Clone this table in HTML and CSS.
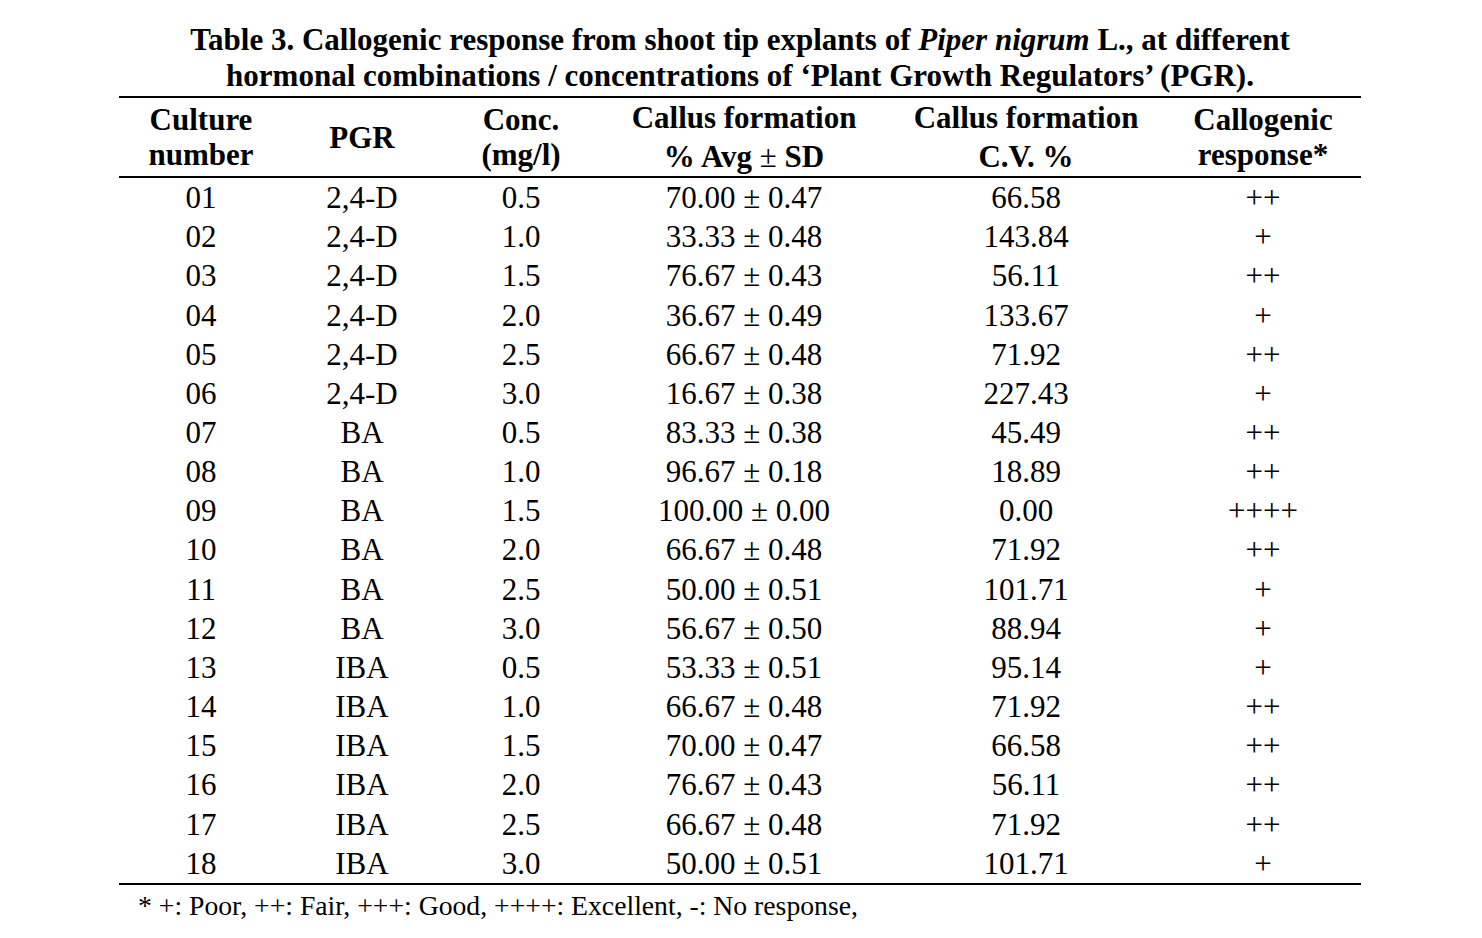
FILE: index.html
```html
<!DOCTYPE html>
<html>
<head>
<meta charset="utf-8">
<link rel="stylesheet" href="styles.css">
</head>
<body>
<div class="page">
  <h1 class="title">Table 3. Callogenic response from shoot tip explants of <i>Piper nigrum</i> L., at different<br>hormonal combinations / concentrations of ‘Plant Growth Regulators’ (PGR).</h1>
  <table class="data">
    <colgroup>
      <col class="c1"><col class="c2"><col class="c3"><col class="c4"><col class="c5"><col class="c6">
    </colgroup>
    <thead>
      <tr>
        <th>Culture<br>number</th>
        <th>PGR</th>
        <th>Conc.<br>(mg/l)</th>
        <th class="wide">Callus formation<br>% Avg <span class="pm">±</span> SD</th>
        <th class="wide">Callus formation<br>C.V. %</th>
        <th>Callogenic<br>response*</th>
      </tr>
    </thead>
    <tbody>
      <tr><td>01</td><td>2,4-D</td><td>0.5</td><td>70.00 ± 0.47</td><td>66.58</td><td>++</td></tr>
      <tr><td>02</td><td>2,4-D</td><td>1.0</td><td>33.33 ± 0.48</td><td>143.84</td><td>+</td></tr>
      <tr><td>03</td><td>2,4-D</td><td>1.5</td><td>76.67 ± 0.43</td><td>56.11</td><td>++</td></tr>
      <tr><td>04</td><td>2,4-D</td><td>2.0</td><td>36.67 ± 0.49</td><td>133.67</td><td>+</td></tr>
      <tr><td>05</td><td>2,4-D</td><td>2.5</td><td>66.67 ± 0.48</td><td>71.92</td><td>++</td></tr>
      <tr><td>06</td><td>2,4-D</td><td>3.0</td><td>16.67 ± 0.38</td><td>227.43</td><td>+</td></tr>
      <tr><td>07</td><td>BA</td><td>0.5</td><td>83.33 ± 0.38</td><td>45.49</td><td>++</td></tr>
      <tr><td>08</td><td>BA</td><td>1.0</td><td>96.67 ± 0.18</td><td>18.89</td><td>++</td></tr>
      <tr><td>09</td><td>BA</td><td>1.5</td><td>100.00 ± 0.00</td><td>0.00</td><td>++++</td></tr>
      <tr><td>10</td><td>BA</td><td>2.0</td><td>66.67 ± 0.48</td><td>71.92</td><td>++</td></tr>
      <tr><td>11</td><td>BA</td><td>2.5</td><td>50.00 ± 0.51</td><td>101.71</td><td>+</td></tr>
      <tr><td>12</td><td>BA</td><td>3.0</td><td>56.67 ± 0.50</td><td>88.94</td><td>+</td></tr>
      <tr><td>13</td><td>IBA</td><td>0.5</td><td>53.33 ± 0.51</td><td>95.14</td><td>+</td></tr>
      <tr><td>14</td><td>IBA</td><td>1.0</td><td>66.67 ± 0.48</td><td>71.92</td><td>++</td></tr>
      <tr><td>15</td><td>IBA</td><td>1.5</td><td>70.00 ± 0.47</td><td>66.58</td><td>++</td></tr>
      <tr><td>16</td><td>IBA</td><td>2.0</td><td>76.67 ± 0.43</td><td>56.11</td><td>++</td></tr>
      <tr><td>17</td><td>IBA</td><td>2.5</td><td>66.67 ± 0.48</td><td>71.92</td><td>++</td></tr>
      <tr><td>18</td><td>IBA</td><td>3.0</td><td>50.00 ± 0.51</td><td>101.71</td><td>+</td></tr>
    </tbody>
  </table>
  <p class="note">* +: Poor, ++: Fair, +++: Good, ++++: Excellent, -: No response,</p>
</div>
</body>
</html>
```

FILE: styles.css
```css
html, body {
  margin: 0;
  padding: 0;
  background: #ffffff;
}
body {
  font-family: "Liberation Serif", "Times New Roman", serif;
  color: #000000;
}
.page {
  width: 1242px;
  margin-left: 119px;
  padding-top: 22px;
}
.title {
  margin: 0;
  font-size: 31px;
  line-height: 36px;
  font-weight: bold;
  text-align: center;
  white-space: nowrap;
}
.title i {
  font-style: italic;
}
.data {
  width: 1242px;
  border-collapse: collapse;
  table-layout: fixed;
  margin-top: 2px;
  border-top: 2px solid #000;
  border-bottom: 2px solid #000;
}
.c1 { width: 164px; }
.c2 { width: 158px; }
.c3 { width: 160px; }
.c4 { width: 286px; }
.c5 { width: 278px; }
.c6 { width: 196px; }
.data thead tr {
  border-bottom: 2px solid #000;
}
.data th {
  height: 78px;
  padding: 0;
  font-size: 31px;
  line-height: 35px;
  font-weight: bold;
  text-align: center;
  vertical-align: middle;
  white-space: nowrap;
}
.data th.wide {
  line-height: 39px;
}
.pm {
  font-weight: normal;
}
.data td {
  height: 39.17px;
  padding: 0;
  font-size: 31px;
  line-height: 39px;
  text-align: center;
  vertical-align: middle;
  white-space: nowrap;
}
.note {
  margin: 4px 0 0 19px;
  font-size: 27.7px;
  line-height: 34px;
}
```
